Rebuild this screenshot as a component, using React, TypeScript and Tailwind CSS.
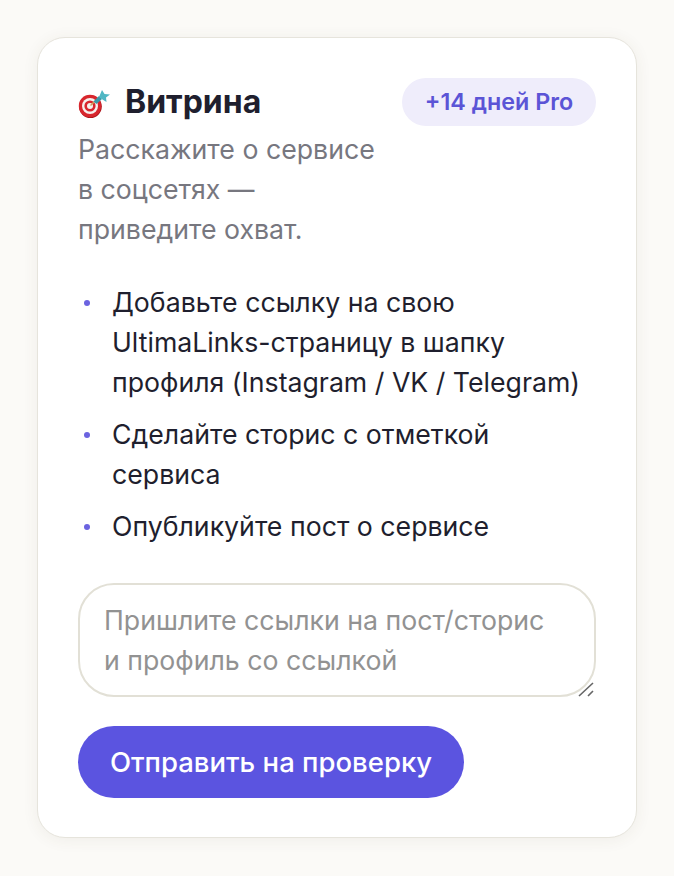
export default function App() {
  const font = "[font-family:Inter,'Noto_Sans',sans-serif]";
  const Dot = () => <span className="mt-[18px] mr-[22px] ml-[6px] h-[6px] w-[6px] shrink-0 rounded-full bg-[#6b63e0]" />;
  return (
    <div className={`min-h-[876px] bg-[#fbfaf7] pt-[37px] pl-[37px] ${font}`}>
      <div className="h-[801px] w-[600px] rounded-[28px] border border-[#e6e4dc] bg-white px-[40px] pt-[40px] shadow-[0_2px_16px_rgba(80,70,40,0.07)]">
        <div className="flex items-start justify-between">
          <div>
            <div className="mb-[3px] flex h-[48px] items-center">
              <svg width="34" height="30" viewBox="0 0 34 30" className="mr-[13px] mt-[2px]">
                <circle cx="12.4" cy="18.6" r="11.4" fill="#a9141a" />
                <circle cx="12" cy="18" r="11.2" fill="#d8262d" />
                <circle cx="12" cy="18" r="8" fill="#f6f1ee" />
                <circle cx="12" cy="18" r="5.6" fill="#d8262d" />
                <circle cx="12" cy="18" r="3" fill="#f6f1ee" />
                <path d="M12.5 17.5 L17 13" stroke="#c9a15a" strokeWidth="1.4" />
                <path d="M15.5 13.5 L21 8 L24 11 L18.5 16 Z" fill="#3a98a8" />
                <path d="M21 9 L24 2 L26.5 6 L32 6.5 L28 9.5 L28.5 14 L24.5 11.5 Z" fill="#4fb7c4" />
              </svg>
              <h2 className="text-[32px] leading-[40px] font-bold text-[#1f1f2e]">Витрина</h2>
            </div>
            <p className="text-[26.7px] leading-[40px] text-[#77777f]">
              Расскажите о сервисе<br />в соцсетях —<br />приведите охват.
            </p>
          </div>
          <span className="flex h-[48px] w-[194px] items-center justify-center rounded-full bg-[#efedfb] text-[23.3px] font-semibold text-[#5b54d6]">+14 дней Pro</span>
        </div>
        <ul className="mt-[33px] flex flex-col gap-[12px] text-[26.7px] leading-[40px] text-[#1f1f2e]">
          <li className="flex"><Dot /><span>Добавьте ссылку на свою<br />UltimaLinks-страницу в шапку<br />профиля (Instagram / VK / Telegram)</span></li>
          <li className="flex"><Dot /><span>Сделайте сторис с отметкой<br />сервиса</span></li>
          <li className="flex"><Dot /><span>Опубликуйте пост о сервисе</span></li>
        </ul>
        <div className="relative mt-[37px] h-[114px] w-[518px]">
          <textarea
            placeholder="Пришлите ссылки на пост/сторис и профиль со ссылкой"
            className="block h-full w-full resize-none rounded-[36px] border-2 border-[#e2e0d6] bg-white py-[15px] pr-[40px] pl-[24px] text-[26.7px] leading-[40px] text-[#1f1f2e] placeholder:text-[#929292]"
          />
          <svg width="18" height="16" viewBox="0 0 18 16" className="absolute right-0 bottom-0">
            <path d="M1 15 L15 2 M10 15 L15 10" stroke="#666" strokeWidth="1.6" fill="none" />
          </svg>
        </div>
        <button className="mt-[29px] flex h-[72px] w-[386px] items-center justify-center rounded-full bg-[#5b54e0] pt-[1px] text-[27.5px] font-medium text-white">Отправить на проверку</button>
      </div>
    </div>
  );
}
